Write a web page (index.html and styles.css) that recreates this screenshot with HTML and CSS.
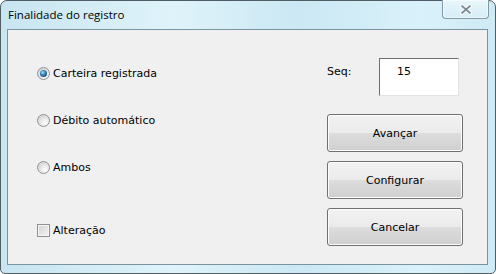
FILE: index.html
```html
<!DOCTYPE html>
<html lang="pt">
<head>
    <meta charset="UTF-8">
    <title>Finalidade do registro</title>
    <link rel="stylesheet" href="styles.css">
</head>
<body>
    <div class="window">
        <div class="title-bar">
            <span class="title">Finalidade do registro</span>
            <button class="close-btn" aria-label="Fechar">
                <svg width="14" height="11" viewBox="0 0 14 11">
                    <path d="M3 2 L11 9 M11 2 L3 9" stroke="#ffffff" stroke-width="3.6" stroke-linecap="round"/>
                    <path d="M3 2 L11 9 M11 2 L3 9" stroke="#7c8a91" stroke-width="1.7" stroke-linecap="round"/>
                </svg>
            </button>
        </div>

        <div class="client">
            <div class="options">
                <label class="option">
                    <span class="radio checked"></span>
                    <span>Carteira registrada</span>
                </label>
                <label class="option">
                    <span class="radio"></span>
                    <span>Débito automático</span>
                </label>
                <label class="option">
                    <span class="radio"></span>
                    <span>Ambos</span>
                </label>
                <label class="option option-check">
                    <span class="checkbox"></span>
                    <span>Alteração</span>
                </label>
            </div>

            <div class="actions">
                <div class="seq-row">
                    <span class="seq-label">Seq:</span>
                    <div class="seq-input">15</div>
                </div>
                <button class="btn">Avançar</button>
                <button class="btn">Configurar</button>
                <button class="btn">Cancelar</button>
            </div>
        </div>
    </div>
</body>
</html>
```

FILE: styles.css
```css
/* Win7 style dialog */

:root {
    --frame-border: #4f5d65;
    --client-border: #7a93a0;
    --client-bg: #f0f0f0;
    --text: #000000;
}

body {
    margin: 0;
    font-family: 'DejaVu Sans', sans-serif;
    font-size: 11px;
    color: var(--text);
}

.window {
    width: 496px;
    height: 274px;
    box-sizing: border-box;
    border: 1px solid var(--frame-border);
    border-radius: 7px 7px 5px 5px;
    background: linear-gradient(to right, #c8e5f1 0%, #dff3fa 35%, #cbe8f4 60%, #d9f1fa 85%, #cfeaf5 100%);
    padding: 0 7px 8px 6px;
    display: flex;
    flex-direction: column;
}

/* Title bar */
.title-bar {
    height: 28px;
    flex-shrink: 0;
    display: flex;
    align-items: flex-start;
    justify-content: space-between;
}

.title {
    font-family: 'Open Sans', sans-serif;
    font-size: 11.5px;
    margin-top: 6px;
    padding-left: 1px;
}

.close-btn {
    width: 47px;
    height: 19px;
    margin-top: -1px;
    margin-right: -1px;
    padding: 0;
    border: 1px solid #8399a4;
    border-top: none;
    border-radius: 0 0 4px 4px;
    background: linear-gradient(#e8f6fb, #d5eef7);
    box-shadow: inset 0 0 0 1px rgba(255, 255, 255, 0.6);
    display: flex;
    align-items: center;
    justify-content: center;
}

/* Client area */
.client {
    flex: 1;
    min-height: 0;
    background: var(--client-bg);
    border: 1px solid var(--client-border);
    display: flex;
    justify-content: space-between;
    padding: 28px 24px 0 29px;
}

.options {
    display: flex;
    flex-direction: column;
    gap: 27px;
    padding-top: 5px;
}

.option {
    display: flex;
    align-items: center;
    gap: 3px;
    height: 20px;
}

.option-check {
    margin-top: 16px;
}

.radio {
    width: 11px;
    height: 11px;
    border: 1px solid #8f9394;
    border-radius: 50%;
    background: radial-gradient(circle at 65% 70%, #fdfdfd 0%, #e6e6e6 45%, #c9c9c9 100%);
    display: flex;
    align-items: center;
    justify-content: center;
}

.radio.checked::after {
    content: "";
    width: 7px;
    height: 7px;
    border-radius: 50%;
    background: radial-gradient(circle at 40% 35%, #b8e4f7 0%, #3a8dc0 35%, #15486f 80%);
}

.checkbox {
    width: 11px;
    height: 11px;
    border: 1px solid #8f8f8f;
    background: linear-gradient(135deg, #d2d2d2, #f4f4f4);
    box-shadow: inset 0 0 0 1px #f7f7f7;
}

/* Right column */
.actions {
    display: flex;
    flex-direction: column;
    gap: 9px;
    width: 136px;
}

.seq-row {
    display: flex;
    align-items: flex-start;
    justify-content: space-between;
    padding-right: 4px;
    margin-bottom: 9px;
}

.seq-label {
    margin-top: 7px;
}

.seq-input {
    width: 80px;
    height: 38px;
    box-sizing: border-box;
    background: #ffffff;
    border-top: 1px solid #6e6e6e;
    border-left: 1px solid #6e6e6e;
    border-right: 1px solid #e3e3e3;
    border-bottom: 1px solid #e3e3e3;
    padding: 6px 0 0 17px;
}

.btn {
    height: 38px;
    flex-shrink: 0;
    border: 1px solid #707070;
    border-radius: 3px;
    background: linear-gradient(#f2f2f2 0%, #ebebeb 49%, #dddddd 50%, #cfcfcf 100%);
    box-shadow: inset 0 0 0 1px #fcfcfc;
    font-family: 'DejaVu Sans', sans-serif;
    font-size: 11px;
    color: var(--text);
    padding: 0;
}
```
